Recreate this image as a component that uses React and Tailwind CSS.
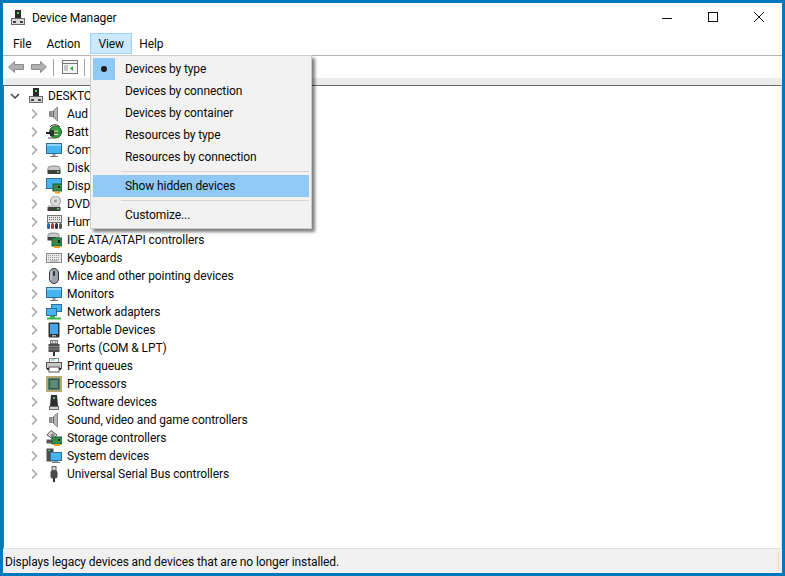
const Svg = ({ children, w = 16, h = 16 }) => (
  <svg width={w} height={h} viewBox={`0 0 ${w} ${h}`} className="shrink-0">{children}</svg>
);

const Computer = () => (
  <Svg>
    <rect x="5" y="0" width="6" height="8" fill="#2b2b2b" />
    <rect x="7" y="2" width="2" height="2" fill="#3ddc5a" />
    <rect x="1.500" y="8.500" width="13" height="6" fill="#d8d8d8" stroke="#6b6b6b" />
    <rect x="3" y="11" width="3" height="2" fill="#444" />
    <rect x="10" y="11" width="3" height="2" fill="#444" />
  </Svg>
);
const Speaker = () => (
  <Svg>
    <path d="M3.500 5.500h3L11.500 1v14l-5-4.500h-3z" fill="#b5b5b5" stroke="#8a8a8a" />
    <path d="M7.500 5v6" stroke="#666" />
    <rect x="4" y="6" width="2" height="4" fill="#8f8f8f" />
  </Svg>
);
const Battery = () => (
  <Svg>
    <circle cx="9.500" cy="8" r="6" fill="#3a9b3c" stroke="#1f5f22" />
    <path d="M4 3c2-3 8-3 10 0" stroke="#333" fill="none" />
    <path d="M0 9h5" stroke="#222" strokeWidth="2" />
    <rect x="4" y="6" width="4" height="6" fill="#333" />
    <path d="M8 7h4M8 10.500h4" stroke="#ddd" />
    <path d="M2 14h6" stroke="#555" />
  </Svg>
);
const Monitor = () => (
  <Svg>
    <rect x="0.500" y="1.500" width="15" height="10" fill="#47b3f0" stroke="#2a6f9e" />
    <rect x="1" y="2" width="14" height="2" fill="#8fd4f8" />
    <rect x="6.500" y="12" width="3" height="2" fill="#9a9a9a" />
    <rect x="4" y="14" width="8" height="1" fill="#777" />
  </Svg>
);
const Disk = () => (
  <Svg>
    <path d="M2 7.500c1-2 11-2 12 0v3H2z" fill="#c9c9c9" stroke="#8a8a8a" />
    <rect x="1.500" y="10" width="13" height="4" fill="#3f3f3f" />
    <rect x="11" y="11" width="2" height="1.500" fill="#5de06a" />
  </Svg>
);
const Display = () => (
  <Svg>
    <rect x="0.500" y="0.500" width="15" height="10" fill="#47b3f0" stroke="#2a6f9e" />
    <rect x="6.500" y="11" width="2" height="2" fill="#9a9a9a" />
    <rect x="7" y="6" width="9" height="7" fill="#2f8f4e" stroke="#1e5f33" />
    <rect x="9" y="8" width="2" height="2" fill="#8c5a2b" />
    <rect x="12" y="8" width="2" height="2" fill="#222" />
    <path d="M9 13.500h5v2H9z" fill="#f0a11f" />
  </Svg>
);
const Dvd = () => (
  <Svg>
    <circle cx="9.500" cy="5" r="5" fill="#dedede" stroke="#9a9a9a" />
    <circle cx="9.500" cy="5" r="1.500" fill="#999" />
    <path d="M2 9h12v2H2z" fill="#c9c9c9" />
    <rect x="1.500" y="11" width="13" height="4" fill="#3f3f3f" />
    <rect x="11" y="12" width="2" height="1.500" fill="#5de06a" />
  </Svg>
);
const Hid = () => (
  <Svg>
    <rect x="1.500" y="1.500" width="14" height="7" fill="#e4e4e4" stroke="#777" />
    <path d="M3 3.500h11M3 5.500h11" stroke="#777" strokeDasharray="1 1" />
    <rect x="1" y="9" width="3" height="6" rx="1.500" fill="#2c5fb0" />
    <rect x="5" y="9" width="3" height="6" rx="1.500" fill="#b03a3a" />
    <rect x="9" y="9" width="3" height="6" rx="1.500" fill="#333" />
    <rect x="13" y="9" width="3" height="6" rx="1.500" fill="#555" />
  </Svg>
);
const Ide = () => (
  <Svg>
    <path d="M2 2.500c1-2 10-2 11 0v3H2z" fill="#c9c9c9" stroke="#8a8a8a" />
    <rect x="1.500" y="5" width="8" height="3.500" fill="#3f3f3f" />
    <rect x="6" y="6" width="10" height="8" fill="#2f8f4e" stroke="#1e5f33" />
    <rect x="8" y="8" width="2" height="2" fill="#8c5a2b" />
    <rect x="12" y="8" width="2" height="3" fill="#222" />
    <path d="M8 14h6v2H8z" fill="#f0a11f" />
  </Svg>
);
const Keyboard = () => (
  <Svg>
    <rect x="0.500" y="3.500" width="15" height="9" fill="#e8e8e8" stroke="#8a8a8a" />
    <path d="M2 5.500h12M2 7.500h12M2 9.500h12" stroke="#9a9a9a" strokeDasharray="1 1" />
    <path d="M4 11h8" stroke="#9a9a9a" />
  </Svg>
);
const Mouse = () => (
  <Svg>
    <rect x="3.500" y="0.500" width="9" height="15" rx="4.500" fill="#9aa3ad" stroke="#333" />
    <rect x="7" y="3" width="2" height="5" rx="1" fill="#333" />
    <path d="M5 3v9" stroke="#d6dbe0" />
  </Svg>
);
const Network = () => (
  <Svg>
    <rect x="5.500" y="0.500" width="10" height="7" fill="#47b3f0" stroke="#2a6f9e" />
    <rect x="0.500" y="4.500" width="10" height="7" fill="#47b3f0" stroke="#2a6f9e" />
    <path d="M5 11.500v2M1 14.500h14" stroke="#39b54a" strokeWidth="2" />
    <rect x="4" y="12" width="5" height="3" fill="#39b54a" />
  </Svg>
);
const Portable = () => (
  <Svg>
    <rect x="2.500" y="0.500" width="11" height="15" fill="#333" rx="1" />
    <rect x="4" y="2" width="8" height="10" fill="#47a6ec" />
    <rect x="6" y="13" width="4" height="1.500" fill="#aaa" />
  </Svg>
);
const Ports = () => (
  <Svg>
    <rect x="4.500" y="0.500" width="7" height="3" fill="#ddd" stroke="#777" />
    <path d="M6 2h1M9 2h1" stroke="#555" />
    <rect x="2.500" y="4" width="11" height="8" fill="#4d4d4d" />
    <path d="M3 6.500h10M3 9h10" stroke="#8a8a8a" />
    <rect x="7" y="12" width="2" height="4" fill="#333" />
  </Svg>
);
const Printer = () => (
  <Svg>
    <rect x="3.500" y="0.500" width="9" height="4" fill="#fff" stroke="#888" />
    <rect x="5" y="1.500" width="4" height="1" fill="#38b6e8" />
    <rect x="0.500" y="4.500" width="15" height="6" fill="#c9c9c9" stroke="#555" />
    <rect x="3" y="9" width="10" height="5" fill="#fff" stroke="#555" />
    <path d="M1 11h2M13 11h2" stroke="#333" strokeWidth="2" />
  </Svg>
);
const Cpu = () => (
  <Svg>
    <rect x="0.500" y="0.500" width="15" height="15" fill="#d9b24a" strokeDasharray="1 1" stroke="#8a7a3a" />
    <rect x="2" y="2" width="12" height="12" fill="#2f5d4a" stroke="#7f9f8a" />
    <rect x="4" y="4" width="8" height="8" fill="#5f8a75" />
  </Svg>
);
const Software = () => (
  <Svg>
    <path d="M5 1h6l1 11H4z" fill="#2f2f2f" />
    <rect x="7" y="3" width="2" height="2" fill="#3ddc5a" />
    <rect x="3.500" y="12.500" width="9" height="3" fill="#d0d0d0" stroke="#6b6b6b" />
  </Svg>
);
const Storage = () => (
  <Svg>
    <path d="M5 0.500L11 5 7 9 1 5z" fill="#d8d8d8" stroke="#555" />
    <path d="M4 5l3-2 2 2-3 2z" fill="#888" />
    <rect x="0.500" y="9.500" width="6" height="4" fill="#555" />
    <rect x="6" y="7" width="10" height="7" fill="#2f8f4e" stroke="#1e5f33" />
    <rect x="8" y="9" width="2" height="2" fill="#8c5a2b" />
    <rect x="12" y="9" width="2" height="2" fill="#222" />
    <path d="M8 14h6v2H8z" fill="#f0a11f" />
  </Svg>
);
const SystemDev = () => (
  <Svg>
    <rect x="0.500" y="0.500" width="7" height="13" fill="#4d4d4d" />
    <rect x="2" y="2" width="2" height="1" fill="#3ddc5a" />
    <rect x="4.500" y="4.500" width="11" height="8" fill="#47b3f0" stroke="#2a6f9e" />
    <rect x="8" y="13" width="4" height="1" fill="#999" />
    <rect x="6" y="14" width="8" height="1" fill="#777" />
  </Svg>
);
const Usb = () => (
  <Svg>
    <rect x="6" y="0.500" width="4" height="4" fill="#c8c8c8" stroke="#666" />
    <rect x="4.500" y="4.500" width="7" height="8" rx="2" fill="#4a4a4a" />
    <rect x="7" y="12" width="2" height="4" fill="#333" />
  </Svg>
);

const Chevron = ({ down }) => (
  <svg width="10" height="10" viewBox="0 0 10 10" className="shrink-0">
    {down ? (
      <path d="M1 3l4 4 4-4" fill="none" stroke="#404040" strokeWidth="1.500" />
    ) : (
      <path d="M3 0.500L7.500 5 3 9.500" fill="none" stroke="#a6a6a6" strokeWidth="1.500" />
    )}
  </svg>
);

const devices = [
  ["Aud", Speaker],
  ["Batt", Battery],
  ["Com", Monitor],
  ["Disk", Disk],
  ["Disp", Display],
  ["DVD", Dvd],
  ["Hum", Hid],
  ["IDE ATA/ATAPI controllers", Ide],
  ["Keyboards", Keyboard],
  ["Mice and other pointing devices", Mouse],
  ["Monitors", Monitor],
  ["Network adapters", Network],
  ["Portable Devices", Portable],
  ["Ports (COM & LPT)", Ports],
  ["Print queues", Printer],
  ["Processors", Cpu],
  ["Software devices", Software],
  ["Sound, video and game controllers", Speaker],
  ["Storage controllers", Storage],
  ["System devices", SystemDev],
  ["Universal Serial Bus controllers", Usb],
];

const MenuItem = ({ label, active, checked }) => (
  <div className={`flex h-[22px] items-center ${active ? "bg-[#90c8f6]" : ""}`}>
    <div className={`flex h-[22px] w-[22px] items-center justify-center ${checked ? "bg-[#90c8f6]" : ""}`}>
      {checked && <div className="h-[6px] w-[6px] rounded-full bg-[#1a1a1a]" />}
    </div>
    <span className="ml-[10px]">{label}</span>
  </div>
);

const Sep = () => <div className="my-[3px] ml-[28px] h-px bg-[#d7d7d7]" />;

export default function App() {
  return (
    <div className="relative flex h-[576px] w-[785px] flex-col overflow-hidden border-[3px] border-[#0078c0] bg-white font-['Roboto','Open_Sans',sans-serif] text-[12px] leading-[16px] tracking-[-0.1px] text-[#0a0a0a]">
      {/* Title bar */}
      <div className="flex h-[29px] shrink-0 items-center">
        <div className="ml-[7px] mt-px"><Computer /></div>
        <span className="ml-[6px]">Device Manager</span>
        <div className="ml-auto flex h-full items-center">
          <svg width="46" height="29" viewBox="0 0 46 29"><path d="M18 15.500h10" stroke="#111" /></svg>
          <svg width="46" height="29" viewBox="0 0 46 29"><rect x="18.500" y="9.500" width="9" height="9" fill="none" stroke="#111" /></svg>
          <svg width="46" height="29" viewBox="0 0 46 29"><path d="M18 9l10 10M28 9l-10 10" stroke="#111" /></svg>
        </div>
      </div>
      {/* Menu bar */}
      <div className="flex h-[24px] shrink-0 items-center border-b border-[#b4b4b4] pl-[3px]">
        <div className="flex h-[20px] items-center pl-[7px] pr-[8px]">File</div>
        <div className="flex h-[20px] items-center pl-[7px] pr-[10px]">Action</div>
        <div className="flex h-[21px] w-[42px] items-center justify-center border border-[#99d1ff] bg-[#cce8ff]">View</div>
        <div className="flex h-[20px] items-center px-[7px]">Help</div>
      </div>
      {/* Toolbar */}
      <div className="flex h-[22px] shrink-0 items-center bg-white pl-[5px]">
        <svg width="16" height="12" viewBox="0 0 16 12"><path d="M0.500 6l6-5.500v3h9v5h-9v3z" fill="#b0b0b0" stroke="#8c8c8c" /></svg>
        <svg className="ml-[7px]" width="16" height="12" viewBox="0 0 16 12"><path d="M15.500 6l-6-5.500v3h-9v5h9v3z" fill="#b0b0b0" stroke="#8c8c8c" /></svg>
        <div className="ml-[6px] h-[17px] w-px bg-[#a0a0a0]" />
        <svg className="ml-[8px]" width="16" height="14" viewBox="0 0 16 14">
          <rect x="0.500" y="0.500" width="15" height="13" fill="#f4f4f4" stroke="#777" />
          <path d="M1 3.500h14" stroke="#777" />
          <path d="M2 6h4M2 8h4M2 10h4" stroke="#999" />
          <path d="M11 6v5L8 8.500z" fill="#2fa84f" />
        </svg>
        <div className="ml-[6px] h-[17px] w-px bg-[#a0a0a0]" />
      </div>
      {/* Strip above tree */}
      <div className="h-[7px] shrink-0 bg-[#ececec]" />
      {/* Tree */}
      <div className="min-h-0 flex-1 border-x border-t border-b border-l-[#696969] border-r-[#e3e3e3] border-t-[#696969] border-b-[#e3e3e3] bg-white pt-px">
        <div className="flex h-[18px] items-center pl-[6px]">
          <Chevron down />
          <div className="ml-[8px]"><Computer /></div>
          <span className="ml-[4px]">DESKTO</span>
        </div>
        {devices.map(([label, Icon]) => (
          <div key={label} className="flex h-[18px] items-center pl-[25px]">
            <Chevron />
            <div className="ml-[7px]"><Icon /></div>
            <span className="ml-[5px] whitespace-nowrap">{label}</span>
          </div>
        ))}
      </div>
      {/* Status bar */}
      <div className="flex h-[24px] shrink-0 items-center bg-[#f0f0f0] pl-[2px] pt-[1px]">
        <span>Displays legacy devices and devices that are no longer installed.</span>
        <div className="ml-auto mr-[3px] h-[19px] w-px bg-[#dcdcdc]" />
      </div>
      {/* View menu */}
      <div className="absolute left-[87px] top-[52px] w-[222px] border border-[#cccccc] bg-[#f2f2f2] py-[2px] pl-[2px] pr-[2px] shadow-[3px_3px_3px_rgba(0,0,0,0.5)]">
        <MenuItem label="Devices by type" checked />
        <MenuItem label="Devices by connection" />
        <MenuItem label="Devices by container" />
        <MenuItem label="Resources by type" />
        <MenuItem label="Resources by connection" />
        <Sep />
        <MenuItem label="Show hidden devices" active />
        <Sep />
        <MenuItem label="Customize..." />
      </div>
    </div>
  );
}
